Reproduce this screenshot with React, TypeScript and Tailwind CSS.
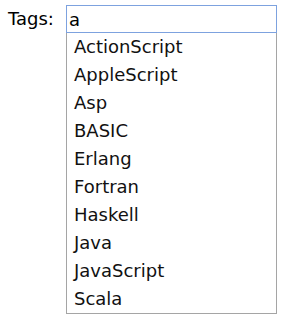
import React from 'react'

const tags = ['ActionScript', 'AppleScript', 'Asp', 'BASIC', 'Erlang', 'Fortran', 'Haskell', 'Java', 'JavaScript', 'Scala']

const App = () => {
  return (
    <div className="w-[288px] h-[326px] bg-white text-[18px] text-black" style={{ fontFamily: '"DejaVu Sans", Verdana, sans-serif' }}>
      <div className="flex items-start pt-[5px] pl-[8px]">
        <label className="h-[28px] leading-[28px] w-[58px] shrink-0">Tags:</label>
        <div className="flex flex-col w-[211px]">
          <input
            defaultValue="a"
            className="h-[28px] w-[211px] border border-[#7da2df] px-[2px] outline-none text-[18px] text-black"
          />
          <ul className="border border-[#a5a5a5] border-t-0">
            {tags.map((t) => (
              <li key={t} className="h-[28px] leading-[28px] pl-[7px] text-[#111]">
                {t}
              </li>
            ))}
          </ul>
        </div>
      </div>
    </div>
  )
}

export default App
